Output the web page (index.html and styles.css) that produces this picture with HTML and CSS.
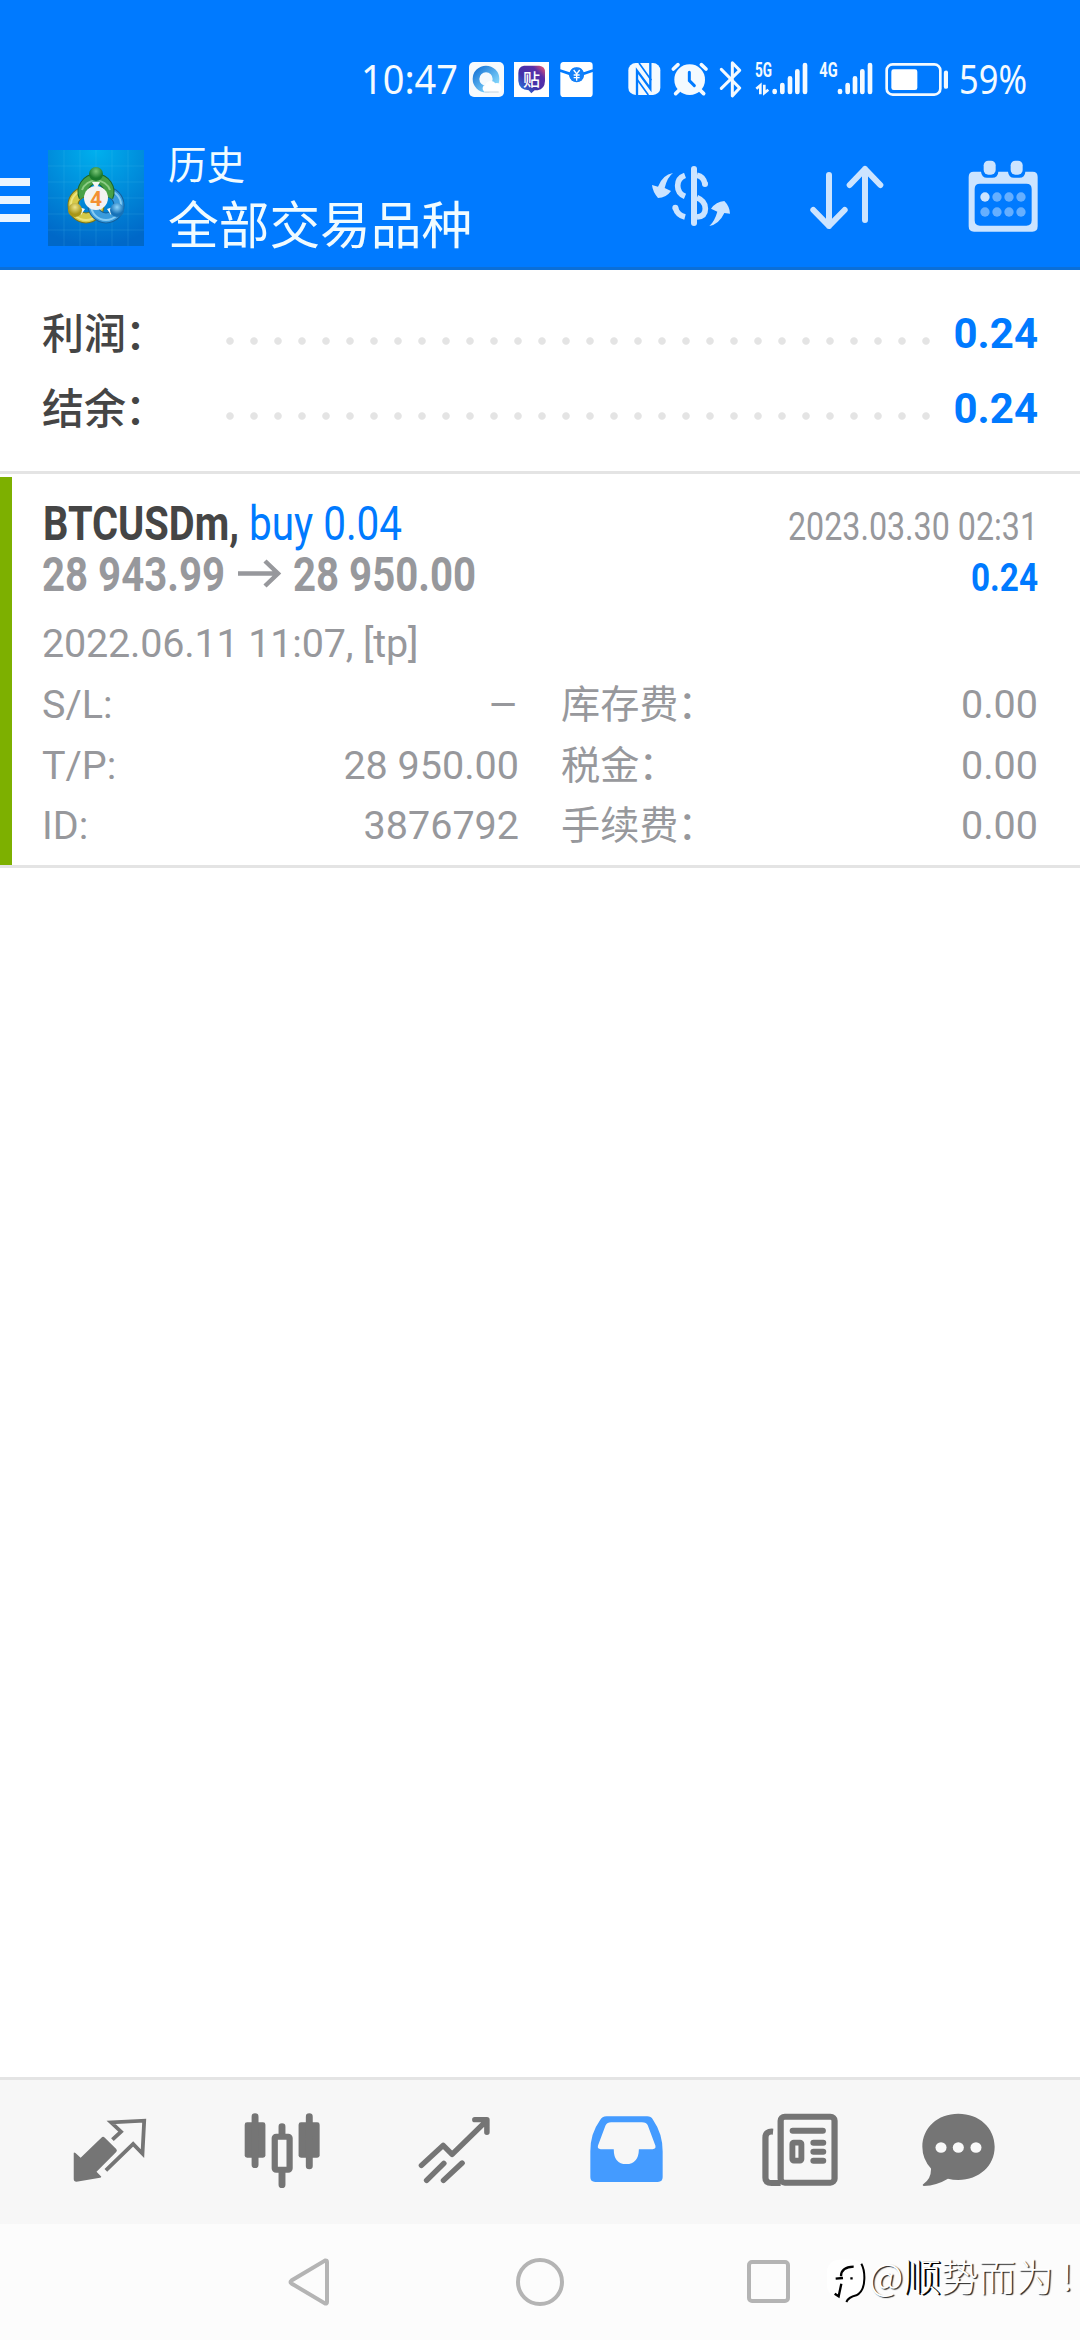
FILE: index.html
```html
<!DOCTYPE html>
<html lang="zh-CN">
<head>
<meta charset="utf-8">
<title>历史</title>
<link rel="stylesheet" href="styles.css">
</head>
<body>
<header class="top">
  <div class="status">
    <svg class="clock" width="107" height="60"><text x="0" y="44" textLength="97" lengthAdjust="spacingAndGlyphs">10:47</text></svg>
    <svg class="st-apps" width="126" height="36" viewBox="0 0 378 108">
      <defs><linearGradient id="q" x1="0" y1="0" x2="1" y2="1"><stop offset="0" stop-color="#1a78d8"/><stop offset="1" stop-color="#8fe0ff"/></linearGradient>
      <linearGradient id="t" x1="0" y1="1" x2="1" y2="0"><stop offset="0" stop-color="#1f8df0"/><stop offset=".4" stop-color="#4232a8"/><stop offset=".75" stop-color="#5a2fa8"/><stop offset="1" stop-color="#ff5a6c"/></linearGradient></defs>
      <rect x="3" y="3" width="105" height="105" rx="15" fill="#f6fafd"/>
      <circle cx="54" cy="54" r="30" fill="none" stroke="url(#q)" stroke-width="20"/>
      <path d="M50 93a12 12 0 0 1 2-22a17 17 0 0 1 30-4a14 14 0 0 1 10 26z" fill="#fff"/><path d="M50 93h42" stroke="#c4d2dc" stroke-width="3"/>
      <rect x="138" y="3" width="105" height="105" fill="#fff"/>
      <path d="M168 14h46q18 2 17 20v26q-1 24-22 28h-9l-10 9-8-9q-29-2-31-28V36q0-20 17-22z" fill="url(#t)"/>
      <text x="165" y="75" font-size="51" class="tie">贴</text>
      <path d="M286 3h78a10 10 0 0 1 10 10v12l-27 9a22 22 0 0 0-42 0l-28-9V13a10 10 0 0 1 9-10z" fill="#fff"/>
      <path d="M277 33l26 9a23 23 0 0 0 45 0l26-9v65a10 10 0 0 1-10 10h-77a10 10 0 0 1-10-10z" fill="#fff"/>
      <circle cx="326" cy="42" r="22" fill="#1480f8"/>
      <path d="M317 27l9 12 9-12M326 39v20M317 42h18M317 50h18" fill="none" stroke="#fff" stroke-width="4"/>
    </svg>
    <svg class="st-sys" width="321" height="40" viewBox="0 0 963 120">
      <rect x="4" y="15" width="96" height="96" rx="22" fill="#f4faff"/>
      <path d="M30 111V38l40 54V15" fill="none" stroke="#007aff" stroke-width="7"/>
      <path d="M36 15l37 52M64 111L30 64" fill="none" stroke="#007aff" stroke-width="5"/>
      <circle cx="188" cy="65" r="46" fill="#f4faff"/><path d="M187 43v25l15 15" fill="none" stroke="#007aff" stroke-width="9" stroke-linecap="round"/>
      <path d="M139 33l14-13M223 20l14 13M156 97l-10 10M220 97l10 10" stroke="#f4faff" stroke-width="11" stroke-linecap="round"/>
      <path d="M283 34l55 56-22 24V14l22 23-55 54" fill="none" stroke="#f4faff" stroke-width="9" stroke-linejoin="round" stroke-linecap="round"/>
      <text x="384" y="58" class="net" textLength="51" lengthAdjust="spacingAndGlyphs">5G</text>
      <path d="M400 109V82l-12 10M412 80v25l12-10" fill="none" stroke="#f4faff" stroke-width="8"/>
      <g stroke="#f4faff" stroke-width="14" stroke-linecap="round"><path d="M443 99v3M466 81v21M489 61v41M511 40v62M534 21v81"/><path d="M639 99v3M662 81v21M684 61v41M706 40v62M729 21v81"/></g>
      <text x="577" y="58" class="net" textLength="55" lengthAdjust="spacingAndGlyphs">4G</text>
      <rect x="779" y="19" width="161" height="91" rx="18" fill="none" stroke="#f4faff" stroke-width="8"/>
      <rect x="793" y="34" width="78" height="62" rx="7" fill="#fff"/><path d="M957 44v42" stroke="#f4faff" stroke-width="13" stroke-linecap="round"/>
    </svg>
    <svg class="pct" width="80" height="60"><text x="0" y="44" textLength="68" lengthAdjust="spacingAndGlyphs">59%</text></svg>
  </div>
  <div class="bar">
    <div class="burger"><i></i><i></i><i></i></div>
    <svg class="app" width="96" height="96" viewBox="0 0 96 96">
      <defs><radialGradient id="bg" cx=".5" cy="0" r="1"><stop offset="0" stop-color="#00b0ee"/><stop offset="1" stop-color="#0068c8"/></radialGradient>
      <radialGradient id="g1" cy=".3"><stop offset="0" stop-color="#7cc878"/><stop offset="1" stop-color="#1b7a2c"/></radialGradient>
      <radialGradient id="g2" cy=".3"><stop offset="0" stop-color="#efe68a"/><stop offset="1" stop-color="#a89518"/></radialGradient>
      <radialGradient id="g3" cy=".3"><stop offset="0" stop-color="#8fd4fa"/><stop offset="1" stop-color="#1672b8"/></radialGradient></defs>
      <rect width="96" height="96" fill="url(#bg)"/>
      <path d="M16 0v96M32 0v96M48 0v96M64 0v96M80 0v96M0 16h96M0 32h96M0 48h96M0 64h96M0 80h96" stroke="#5cc8f4" stroke-opacity=".16"/>
      <g fill="none"><circle cx="38" cy="55" r="13" stroke="#7a7216" stroke-width="11"/><circle cx="38" cy="55" r="13" stroke="#d6ca48" stroke-width="9"/><circle cx="38" cy="55" r="15" stroke="#ece47e" stroke-width="2"/>
      <circle cx="58" cy="55" r="13" stroke="#14609c" stroke-width="11"/><circle cx="58" cy="55" r="13" stroke="#3a9bdc" stroke-width="9"/><circle cx="58" cy="55" r="15" stroke="#86ccf4" stroke-width="2"/>
      <path d="M36 47A13 13 0 1 1 60 47" stroke="#1a6428" stroke-width="11"/><path d="M36 47A13 13 0 1 1 60 47" stroke="#48a046" stroke-width="9"/><path d="M34 40A15 15 0 0 1 62 40" stroke="#8ccb84" stroke-width="2"/></g>
      <path d="M44 32h8l-4 7zM31 57l6 2-4 6zM65 57l-6 2 4 6z" fill="#f4f8f4"/>
      <circle cx="48" cy="24" r="7" fill="url(#g1)"/><circle cx="27" cy="60" r="7" fill="url(#g2)"/><circle cx="69" cy="60" r="7" fill="url(#g3)"/>
      <circle cx="48" cy="48" r="12" fill="#f3f3f3"/><text x="48" y="55.500" class="four">4</text>
    </svg>
    <div class="titles"><div class="t1">历史</div><div class="t2">全部交易品种</div></div>
    <svg class="i-dollar" width="80" height="62" viewBox="150 105 240 186" fill="#cce4ff">
      <path d="M216 129q-17 12-25 45l19 9q-15 21-39 21-16-19-18-39l18 5q14-36 45-41zM325 288q16-14 24-43l-19-9q15-21 40-23 16 16 17 38l-17-2q-16 34-45 39z"/>
      <path d="M279 117v162" stroke="#cce4ff" stroke-width="18" stroke-linecap="round"/>
      <path d="M252 136q-22 8-22 31t22 32M223 233q6 22 29 28M288 136q20 4 24 26M288 203q25 10 25 33t-25 25" fill="none" stroke="#cce4ff" stroke-width="17"/><circle cx="312" cy="162" r="9"/><circle cx="223" cy="233" r="9"/>
    </svg>
    <svg class="i-sort" width="76" height="64" viewBox="624 105 228 192" fill="none" stroke="#cce4ff" stroke-width="18" stroke-linecap="round" stroke-linejoin="round"><path d="M684 135v153M637 240l47 48 47-48M792 270V117M746 165l46-48 46 48"/></svg>
    <svg class="i-cal" width="70" height="72" viewBox="1102 91 210 216">
      <path fill-rule="evenodd" fill="#cce4ff" d="M1119 126h22q2 18 18 18h16q17 0 18-18h29q2 18 18 18h16q17 0 18-18h22q15 0 15 16v148q0 16-16 16h-175q-16 0-16-16V142q0-16 15-16zM1138 162q-16 0-16 16v94q0 16 16 16h139q16 0 16-16v-94q0-16-16-16z"/>
      <rect x="1149" y="93" width="36" height="42" rx="14" fill="#cce4ff"/><rect x="1230" y="93" width="36" height="42" rx="14" fill="#cce4ff"/>
      <circle cx="1153" cy="202" r="14" fill="#cce4ff"/><g fill="#66afff"><circle cx="1189" cy="202" r="14"/><circle cx="1225" cy="202" r="14"/><circle cx="1261" cy="202" r="14"/><circle cx="1153" cy="247" r="14"/><circle cx="1189" cy="247" r="14"/><circle cx="1225" cy="247" r="14"/><circle cx="1261" cy="247" r="14"/></g>
    </svg>
  </div>
</header>
<main>
  <section class="summary">
    <div class="srow"><span class="lab">利润<i>：</i></span><span class="dots"></span><b>0.24</b></div>
    <div class="srow"><span class="lab">结余<i>：</i></span><span class="dots"></span><b>0.24</b></div>
  </section>
  <article class="deal">
    <div class="line l1"><svg width="560" height="60" class="cond"><text x="0" y="48" textLength="196" lengthAdjust="spacingAndGlyphs" class="sym">BTCUSDm,</text><text x="206" y="48" textLength="153" lengthAdjust="spacingAndGlyphs" class="side">buy 0.04</text></svg><svg width="260" height="60" class="cond"><text x="260" y="48" text-anchor="end" textLength="250" lengthAdjust="spacingAndGlyphs" class="date">2023.03.30 02:31</text></svg></div>
    <div class="line l2"><svg width="560" height="60" class="cond"><text x="-1" y="48" textLength="183" lengthAdjust="spacingAndGlyphs" class="price">28 943.99</text><path d="M195 30.500h40M222 18l13 12.500-13 12.500" fill="none" stroke="#97989c" stroke-width="4.500"/><text x="250" y="48" textLength="183" lengthAdjust="spacingAndGlyphs" class="price">28 950.00</text></svg><svg width="260" height="60" class="cond"><text x="260" y="48" text-anchor="end" textLength="67" lengthAdjust="spacingAndGlyphs" class="gain">0.24</text></svg></div>
    <div class="open">2022.06.11 11:07, [tp]</div>
    <div class="grid">
      <span>S/L:</span><span class="v dash"><i>–</i></span><span class="k2">库存费<i>：</i></span><span class="v">0.00</span>
      <span>T/P:</span><span class="v">28 950.00</span><span class="k2">税金<i>：</i></span><span class="v">0.00</span>
      <span>ID:</span><span class="v">3876792</span><span class="k2">手续费<i>：</i></span><span class="v">0.00</span>
    </div>
  </article>
</main>
<nav class="tabs">
  <svg width="76" height="70" viewBox="210 172 220 210" preserveAspectRatio="none" fill="#757575"><path d="M215 281q0-5 5-1l15 14 60-60q5-5 10 0l33 34q4 4 0 9l-57 59 12 13q4 4-2 5l-68 12q-8 0-8-8z" /><path d="M327 240l25-24-29-28 96-5-5 99-27-29-79 79" fill="none" stroke="#757575" stroke-width="11"/></svg>
  <svg width="76" height="76" viewBox="707 157 220 228" preserveAspectRatio="none" fill="#757575"><rect x="709" y="185" width="60" height="106" rx="7"/><rect x="865" y="185" width="61" height="106" rx="7"/><path d="M739 168v144M896 168v148M817 198v30M817 330v42" stroke="#757575" stroke-width="20" stroke-linecap="round"/><rect x="796" y="228" width="43" height="99" rx="4" fill="#f7f7f7" stroke="#757575" stroke-width="18"/></svg>
  <svg width="72" height="70" viewBox="1212 165 209 210" preserveAspectRatio="none" fill="none" stroke="#757575" stroke-width="16" stroke-linecap="round" stroke-linejoin="round"><path d="M1222 313l63-60 26 27 98-99M1377 176h35v38"/><path d="M1237 358l50-51M1286 358l54-52"/></svg>
  <svg width="73" height="66" viewBox="145 167 212 199" preserveAspectRatio="none"><path fill="#449bff" fill-rule="evenodd" d="M193 168h118q11 0 17 10 28 42 28 95v79q0 14-14 14H160q-14 0-14-14v-79q0-53 28-93 6-12 19-12zM206 186q-11 0-16 10l-22 61q-2 10 8 10h38q0 45 36 45t37-45h40q10 0 8-10l-22-61q-4-10-17-10z"/></svg>
  <svg width="76" height="73" viewBox="645 157 220 219" preserveAspectRatio="none" fill="none" stroke="#757575"><rect x="699" y="168" width="156" height="198" rx="12" stroke-width="18"/><path d="M677 213q-22-2-22 18v120q0 16 18 16h26" stroke-width="18"/><path d="M734 210h87M794 246h28M794 273h28M794 300h28" stroke-width="18" stroke-linecap="round"/><rect x="733" y="246" width="26" height="54" rx="4" stroke-width="17"/></svg>
  <svg width="73" height="74" viewBox="1108 157 211 221" preserveAspectRatio="none"><path fill="#757575" d="M1213 159c60 0 105 42 105 99s-45 99-105 99q-16 0-30-4-32 20-70 22-6-2 0-7 22-16 21-45-25-28-25-65c0-57 44-99 104-99z"/><g fill="#f9f9f9"><circle cx="1163" cy="260" r="16"/><circle cx="1213" cy="260" r="16"/><circle cx="1264" cy="260" r="16"/></g></svg>
</nav>
<footer class="sys">
  <svg width="42" height="48" viewBox="0 0 42 48"><path d="M37 2.500Q39 2 39 4V44Q39 46 37 45.500L3.500 25.500Q1.500 24 3.500 22.500Z" fill="none" stroke="#b4b4b4" stroke-width="4"/></svg>
  <svg width="48" height="48" viewBox="0 0 48 48"><circle cx="24" cy="24" r="22" fill="none" stroke="#b4b4b4" stroke-width="4"/></svg>
  <svg width="44" height="44" viewBox="0 0 44 44"><rect x="2" y="2" width="39" height="39" rx="3" fill="none" stroke="#b4b4b4" stroke-width="4"/></svg>
  <div class="mark"><svg width="40" height="47" viewBox="20 39 120 141"><rect x="20" y="44" width="112" height="114" rx="36" fill="#fff"/><path d="M123 56q10 18 9 46-1 38-24 49-24 6-30 20" fill="none" stroke="#000" stroke-width="6"/><path d="M62 94q0-28 38-29M46 101l22-2M63 116l-8 38-12-8M90 100h7" fill="none" stroke="#000" stroke-width="7"/></svg><span>@<b>顺</b>势而为<i>!</i></span></div>
</footer>
</body>
</html>
```
FILE: styles.css
```css
*{box-sizing:border-box}
body{margin:0;width:1080px;height:2340px;background:#fff;font-family:Roboto,"Noto Sans CJK SC",sans-serif;display:flex;flex-direction:column;overflow:hidden}
svg{display:block;flex:none}
i{font-style:normal}
.top{height:270px;background:#007aff;border-bottom:3px solid #0b6fd8;flex:none}
.status{height:130px;display:flex;padding-left:361px;padding-top:50px}
.clock,.pct{fill:#f4faff;font-family:"Noto Sans",sans-serif;font-size:40px}
.st-apps{margin-top:11px}
.st-sys{margin:8px 0 0 33px}
.pct{margin-left:11px}
.tie{fill:#fff;font-family:"Noto Sans CJK SC",sans-serif;font-weight:500}
.net{fill:#f4faff;font-family:Roboto,sans-serif;font-weight:700;font-size:62px}
.bar{height:137px;display:flex}
.burger{width:48px;padding-top:48px;display:flex;flex-direction:column;gap:10px}
.burger i{width:30px;height:8px;background:#ebf5ff}
.app{margin-top:20px}
.four{font-family:Roboto,sans-serif;font-weight:700;font-size:21px;fill:#f39032;text-anchor:middle}
.titles{margin-left:24px;width:483px;color:#f0fbff;font-weight:400;font-family:"Noto Sans CJK SC",sans-serif}
.t1{font-size:38.500px;line-height:48px;margin-top:8px}
.t2{font-size:50.700px;line-height:60px;margin-top:6px}
.i-dollar{margin-top:35px}
.i-sort{margin:35px 0 0 78px}
.i-cal{margin:30px 0 0 83px}
.summary{height:204px;border-bottom:3px solid #e4e4e4;padding:26px 42px 0 42px}
.srow{height:75px;display:flex;align-items:center;font-size:42px;line-height:75px}
.lab{width:176px;color:#454545;font-weight:500;font-family:"Noto Sans CJK SC",sans-serif;margin-top:-6px}
.lab i,.k2 i{margin-left:-1px}
.dots{width:720px;height:24px;margin-top:15px;background:radial-gradient(circle at 12px 12px,#e4e4e4 3.300px,transparent 4.200px) 0 0/24px 24px}
.srow b{margin-left:auto;color:#007aff;font-weight:700}
.deal{height:394px;border-bottom:3px solid #e4e4e4;padding:18px 42px 0 43px;color:#97989c;font-size:39.500px;background:linear-gradient(#7db000,#7db000) 0 3px/12px 388px no-repeat}
.line{display:flex;justify-content:space-between;height:60px}
.l2{margin-top:-9px}
.cond{overflow:visible}
.sym{font-size:48px;font-weight:700;fill:#454545}
.side{font-size:48px;fill:#007aff}
.price{font-size:48px;font-weight:700;fill:#97989c}
.date{font-size:39.500px;fill:#97989c}
.gain{font-size:39.500px;font-weight:700;fill:#007aff}
.open{line-height:60px;margin-top:11px;height:60px;letter-spacing:-.18px;margin-left:-1px}
.grid{display:grid;grid-template-columns:174px 303px 257px 1fr;grid-auto-rows:60.500px;line-height:60.500px;white-space:nowrap;margin-top:1px;margin-left:-1px}
.v{text-align:right}
.dash i{display:inline-block;transform:scaleX(1.2);transform-origin:right}
.k2{padding-left:42px;margin-top:-4px;font-weight:400;font-size:39.200px;font-family:"Noto Sans CJK SC",sans-serif}
main{flex:1}
.tabs{height:147px;flex:none;border-top:3px solid #e4e4e4;background:#f7f7f7;display:grid;grid-template-columns:172px 171px 173px 173px 174px 142px;padding-left:24px;justify-items:center;align-items:start;padding-top:33px}
.tabs svg:nth-child(1){margin-top:4px}
.tabs svg:nth-child(3),.tabs svg:nth-child(4){margin-top:3px}
.sys{height:116px;flex:none;background:#fcfcfc;display:flex;padding:34px 0 0 288px}
.sys>svg:nth-child(2){margin-left:186px}
.sys>svg:nth-child(3){margin:2px 0 0 183px}
.mark{display:flex;margin-left:36px}
.mark span{font:300 37.600px/48px "Noto Sans CJK SC",sans-serif;color:#fff;text-shadow:1.500px 1px 1px #222;white-space:nowrap;margin-top:-7px;margin-left:2px}
.mark b{font-weight:300;text-shadow:2px 1px 0 #000,1px 0 0 #000}
.mark i{margin-left:8px}
```
